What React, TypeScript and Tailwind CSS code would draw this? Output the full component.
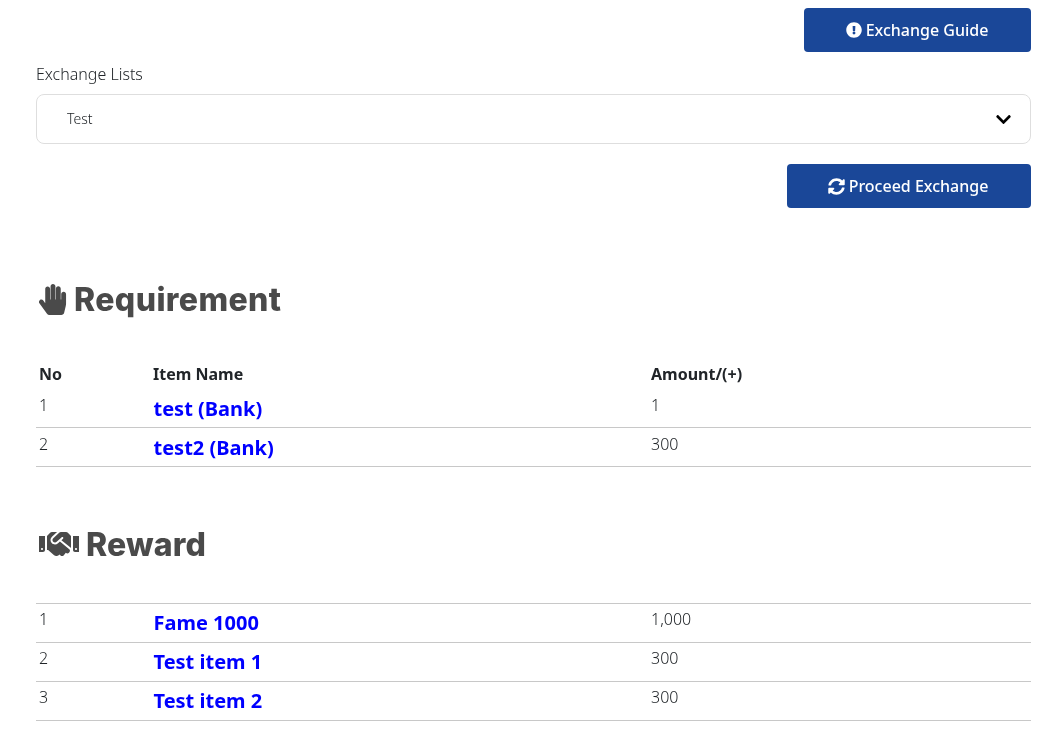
import { FaChevronDown, FaExclamationCircle, FaHandPaper, FaHandshake, FaSyncAlt } from "react-icons/fa";

const requirements = [
  { no: 1, name: "test (Bank)", amount: "1" },
  { no: 2, name: "test2 (Bank)", amount: "300" },
];

const rewards = [
  { no: 1, name: "Fame 1000", amount: "1,000" },
  { no: 2, name: "Test item 1", amount: "300" },
  { no: 3, name: "Test item 2", amount: "300" },
];

type Row = { no: number; name: string; amount: string };

const Rows = ({ rows, topBorder }: { rows: Row[]; topBorder?: boolean }) => (
  <div className={topBorder ? "border-t border-[#c8c8c8]" : ""}>
    {rows.map((row) => (
      <div key={row.no} className="grid grid-cols-[117px_498px_1fr] h-[39px] border-b border-[#c8c8c8]">
        <span className={`pl-[3px] text-[16px] leading-[22px] font-light text-[#212529] ${topBorder ? "pt-[4px]" : "pt-[5px]"}`}>{row.no}</span>
        <a className={`pl-[0.5px] text-[20px] leading-[27px] font-bold text-[#0000ff] ${topBorder ? "pt-[5px]" : "pt-[6px]"}`}>{row.name}</a>
        <span className={`text-[16px] leading-[22px] font-light text-[#212529] ${topBorder ? "pt-[4px]" : "pt-[5px]"}`}>{row.amount}</span>
      </div>
    ))}
  </div>
);

const App = () => {
  return (
    <main className="w-[1042px] h-[746px] overflow-hidden pl-[36px] pr-[11px] pt-[8px] will-change-transform font-['Noto_Sans',sans-serif] text-[#212529]">
      {/* guide */}
      <div className="flex justify-end">
        <button className="flex items-center justify-center gap-[4px] w-[227px] h-[44px] rounded-[4px] bg-[#1a4798] pr-[1px] text-white text-[16px] font-medium">
          <FaExclamationCircle className="text-[16px]" />
          Exchange Guide
        </button>
      </div>
      {/* select */}
      <p className="mt-[10px] h-[25px] text-[16px] leading-[24px] font-light text-[#212529]">Exchange Lists</p>
      <div className="mt-[7px] flex items-center justify-between h-[50px] rounded-[8px] border border-[#dedede] pl-[30px] pr-[18px]">
        <span className="text-[14px] leading-[20px] font-light text-[#212529]">Test</span>
        <FaChevronDown className="text-[17px] text-black" />
      </div>
      <div className="mt-[20px] flex justify-end">
        <button className="flex items-center justify-center gap-[4px] w-[244px] h-[44px] rounded-[4px] bg-[#1a4798] pr-[2px] text-white text-[16px] font-medium">
          <FaSyncAlt className="text-[17px]" />
          Proceed Exchange
        </button>
      </div>
      {/* requirement */}
      <h2 className="mt-[72px] flex items-center gap-[6px] pl-[1px] h-[40px] text-[32px] font-extrabold tracking-[0.4px] font-['Inter',sans-serif] text-[#4a4a4a]">
        <FaHandPaper className="text-[31px] -mt-[2px]" />
        Requirement
      </h2>
      <div className="mt-[42px] grid grid-cols-[117px_498px_1fr] h-[24px] items-center text-[16px] font-bold text-[#212529]">
        <span className="pl-[3px]">No</span>
        <span>Item Name</span>
        <span>Amount/(+)</span>
      </div>
      <div className="mt-[3px]">
        <Rows rows={requirements} />
      </div>
      {/* reward */}
      <h2 className="mt-[58px] flex items-center gap-[7px] pl-[3px] h-[40px] text-[32px] font-extrabold tracking-[0.2px] font-['Inter',sans-serif] text-[#4a4a4a]">
        <FaHandshake className="text-[40px] -mt-[2px]" />
        Reward
      </h2>
      <div className="mt-[38px]">
        <Rows rows={rewards} topBorder />
      </div>
    </main>
  );
};

export default App;
